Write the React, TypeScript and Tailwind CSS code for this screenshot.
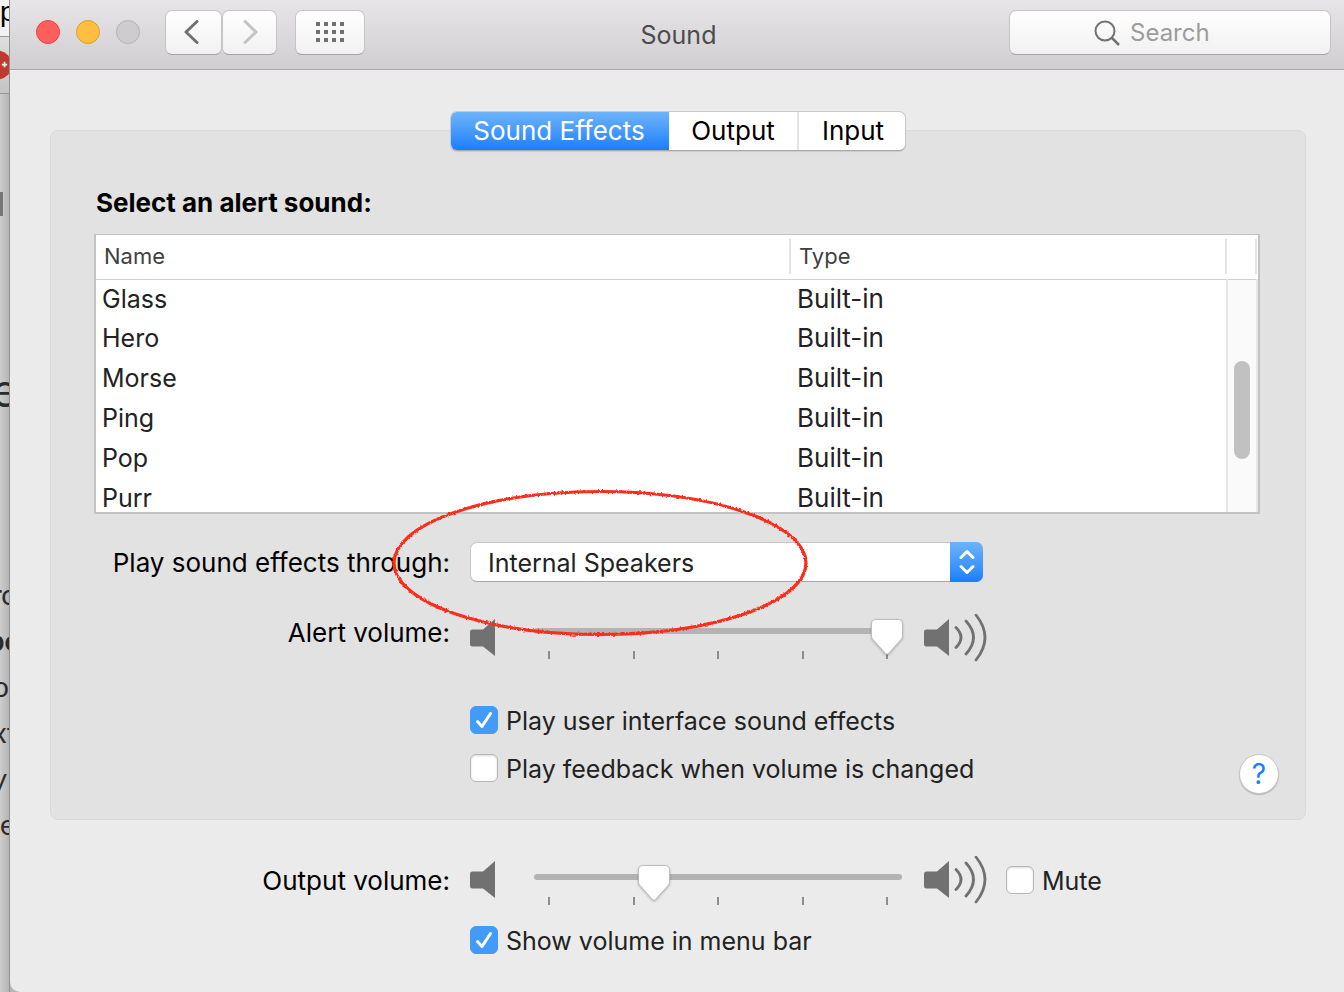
import React, { useState } from 'react';
import clsx from 'clsx';

const sounds = ['Glass', 'Hero', 'Morse', 'Ping', 'Pop', 'Purr'];
const tabs = ['Sound Effects', 'Output', 'Input'];

const tabWidths: Record<string, string> = {
  'Sound Effects': 'w-[218px]',
  Output: 'w-[130px]',
  Input: 'w-[108px]',
};

const speakerBody = 'M2.5 13.500H13L25 3V40L13 30.500H2.500Q0 30.500 0 28V16Q0 13.500 2.500 13.500Z';

const SpeakerLow: React.FC = () => (
  <svg className="h-11 w-[26px] shrink-0 text-[#717171]" viewBox="0 0 26 44" fill="currentColor" aria-hidden="true">
    <path d={speakerBody} />
  </svg>
);

const SpeakerHigh: React.FC = () => (
  <svg className="h-12 w-16 shrink-0 text-[#717171]" viewBox="0 -2 64 48" fill="none" aria-hidden="true">
    <path d={speakerBody} fill="currentColor" />
    <path
      d="M32 11.500Q42 21.500 32 31.500M42 5Q57 21.500 42 38M52 -1Q70 21.500 52 44"
      stroke="currentColor"
      strokeWidth="2.800"
      strokeLinecap="round"
    />
  </svg>
);

interface SliderProps {
  id: string;
  initial: number;
  className?: string;
}

const Slider: React.FC<SliderProps> = ({ id, initial, className }) => {
  const [value, setValue] = useState(initial);

  return (
    <div className={clsx('w-[368px]', className)}>
      <div className="relative flex h-[26px] items-center">
        <input
          id={id}
          type="range"
          min={0}
          max={100}
          value={value}
          onChange={(e) => setValue(Number(e.target.value))}
          className="h-[6px] w-full appearance-none rounded-full bg-[#b3b3b3] outline-none [&::-webkit-slider-thumb]:h-6 [&::-webkit-slider-thumb]:w-8 [&::-webkit-slider-thumb]:appearance-none [&::-webkit-slider-thumb]:bg-transparent"
        />
        {/* Thumb */}
        <div className="pointer-events-none absolute inset-x-[15px] top-0">
          <svg
            className="absolute top-0 h-[38px] w-9 -translate-x-1/2 drop-shadow-[0_1px_1px_rgba(0,0,0,0.25)]"
            style={{ left: `${value}%` }}
            viewBox="0 0 36 38"
            aria-hidden="true"
          >
            <path
              d="M7 1.500H29Q33.500 1.500 33.500 6V18Q33.500 20 32 21.500L19.500 35.500Q18 37 16.500 35.500L4 21.500Q2.500 20 2.500 18V6Q2.500 1.500 7 1.500Z"
              fill="#fff"
              stroke="#bdbdbd"
              strokeWidth="1"
            />
          </svg>
        </div>
      </div>
      <div className="flex justify-between px-[14px] pt-[7px]">
        {[0, 1, 2, 3, 4].map((tick) => (
          <span key={tick} className="h-2 w-[2px] bg-[#8c8c8c]" />
        ))}
      </div>
    </div>
  );
};

interface CheckboxProps {
  label: string;
  initial?: boolean;
}

const Checkbox: React.FC<CheckboxProps> = ({ label, initial = false }) => {
  const [checked, setChecked] = useState(initial);

  return (
    <label className="flex h-7 items-center gap-2 text-[#222]">
      <span className="relative flex size-7 shrink-0">
        <input
          type="checkbox"
          checked={checked}
          onChange={(e) => setChecked(e.target.checked)}
          className="size-7 appearance-none rounded-[6px] border border-[#b5b5b5] bg-white shadow-[inset_0_1px_2px_rgba(0,0,0,0.15)] checked:border-[#429bf9] checked:bg-[#429bf9] checked:shadow-none"
        />
        {checked && (
          <svg className="pointer-events-none absolute inset-0" viewBox="0 0 28 28" fill="none" aria-hidden="true">
            <path d="M7.500 15.500L12 20.500L20.500 7.500" stroke="#fff" strokeWidth="3" strokeLinecap="round" strokeLinejoin="round" />
          </svg>
        )}
      </span>
      <span className="pt-[2px] whitespace-nowrap">{label}</span>
    </label>
  );
};

// Sliver of the page that sits behind the window
const BackgroundPage: React.FC = () => (
  <aside className="w-[10px] shrink-0 overflow-hidden border-r border-[#929292] bg-linear-to-r from-[#cdcdcd] to-[#b5b5b5] font-['Lato',sans-serif] text-[28px] leading-[46px] text-[#2b2b2b]">
    <div className="flex h-[37px] items-center border-b border-[#999] bg-[#f2f2f2] pb-3 font-['Liberation_Sans',sans-serif] text-black">p</div>
    <div className="flex h-[57px] items-center border-b border-[#999] bg-linear-to-b from-[#dedede] to-[#c4c4c4]">
      <svg className="h-8 w-[10px]" viewBox="0 0 10 32" aria-hidden="true">
        <circle cx="-3" cy="16" r="16" fill="#c0392f" />
        <path d="M2 15.500H8M5 12.500V18.500" stroke="#eee" strokeWidth="2" />
      </svg>
    </div>
    <div className="mt-[98px] h-6 w-[3px] bg-[#777]" />
    <div className="mt-[150px] flex h-[46px] justify-center text-[48px]">e</div>
    <div className="mt-[159px]">
      <div className="flex justify-center">ro</div>
      <div className="flex justify-center font-bold">bo</div>
      <div className="flex justify-end">o</div>
      <div className="flex justify-center">xt</div>
      <div className="flex justify-end pr-[2px]">y</div>
      <div className="flex">e</div>
    </div>
  </aside>
);

const Toolbar: React.FC = () => {
  const button =
    'flex h-[45px] items-center justify-center rounded-[7px] border border-[#c6c4c7] border-b-[#a5a3a6] bg-linear-to-b from-white to-[#f1f1f1]';

  return (
    <header className="grid h-[70px] grid-cols-[1fr_auto_1fr] items-center border-b border-[#a9a7aa] bg-linear-to-b from-[#e7e5e8] to-[#d0ced1] pr-[13px] pb-[5px] pl-[26px]">
      <div className="flex items-center">
        <div className="flex gap-4">
          <button type="button" aria-label="Close" className="size-6 rounded-full border border-[#e2463f] bg-[#fd605c]" />
          <button type="button" aria-label="Minimize" className="size-6 rounded-full border border-[#dfa023] bg-[#febe40]" />
          <button type="button" aria-label="Zoom" className="size-6 rounded-full border border-[#b3b2b3] bg-[#cdcdcd]" />
        </div>
        <button type="button" aria-label="Back" className={clsx(button, 'ml-[25px] w-[57px] pr-1')}>
          <svg className="h-6 w-4" viewBox="0 0 16 24" fill="none" stroke="#717171" strokeWidth="3" strokeLinecap="round" strokeLinejoin="round" aria-hidden="true">
            <path d="M13 1.500L2 12L13 22.500" />
          </svg>
        </button>
        <button type="button" aria-label="Forward" className={clsx(button, 'w-[55px]')}>
          <svg className="h-6 w-4" viewBox="0 0 16 24" fill="none" stroke="#c3c3c3" strokeWidth="3" strokeLinecap="round" strokeLinejoin="round" aria-hidden="true">
            <path d="M3 1.500L14 12L3 22.500" />
          </svg>
        </button>
        <button type="button" aria-label="Show All" className={clsx(button, 'ml-[18px] w-[70px]')}>
          <span className="grid grid-cols-4 gap-1">
            {Array.from({ length: 12 }, (_, i) => (
              <span key={i} className="size-1 bg-[#717171]" />
            ))}
          </span>
        </button>
      </div>
      <h1 className="pt-[6px] pr-[10px] text-[#4d4b4e]">Sound</h1>
      <label className="flex h-[45px] w-[322px] items-center gap-[10px] justify-self-end rounded-[7px] border border-[#c6c4c7] border-b-[#a5a3a6] bg-linear-to-b from-white to-[#f1f1f1] pt-[2px] pl-[84px]">
        <svg className="size-[26px] shrink-0" viewBox="0 0 26 26" fill="none" stroke="#717171" strokeWidth="2" aria-hidden="true">
          <circle cx="11" cy="11" r="9.500" />
          <path d="M17.500 17.500L25 25" strokeWidth="2.500" />
        </svg>
        <input
          type="search"
          placeholder="Search"
          aria-label="Search"
          className="min-w-0 flex-1 bg-transparent text-[24px] outline-none placeholder:text-[#9c9c9c]"
        />
      </label>
    </header>
  );
};

const SoundTable: React.FC = () => (
  <div className="mr-[19px] h-[280px] overflow-hidden border-2 border-t border-[#c3c3c3] bg-white">
    <table className="w-full table-fixed border-collapse text-left">
      <colgroup>
        <col />
        <col className="w-[436px]" />
        <col className="w-[30px]" />
      </colgroup>
      <thead>
        <tr className="h-11 border-b border-[#d0d0d0] text-[22px] leading-[35px] text-[#3f3f3f]">
          <th className="p-0 font-normal">
            <div className="border-r-2 border-[#e3e3e3] pl-2">Name</div>
          </th>
          <th className="p-0 font-normal">
            <div className="border-r-2 border-[#e3e3e3] pl-2">Type</div>
          </th>
          <td className="p-0">
            <div className="h-[35px] border-r-2 border-[#e3e3e3]" />
          </td>
        </tr>
      </thead>
      <tbody>
        {sounds.map((sound, index) => (
          <tr key={sound} className="h-10 align-top leading-[38px] text-[#222]">
            <td className="p-0 pl-[6px]">{sound}</td>
            <td className="p-0 pl-[6px] text-[26px]">Built-in</td>
            {index === 0 && (
              <td rowSpan={6} className="border-x-2 border-[#e7e7e7] bg-[#fafafa] p-0 align-top">
                <div className="mx-auto mt-[81px] h-[98px] w-4 rounded-full bg-[#c1c1c1]" />
              </td>
            )}
          </tr>
        ))}
      </tbody>
    </table>
  </div>
);

const App: React.FC = () => {
  const [activeTab, setActiveTab] = useState('Sound Effects');

  return (
    <div className="flex h-screen overflow-hidden bg-[#b5b5b5] font-['Inter',sans-serif] text-[25px] leading-[30px] text-black">
      <BackgroundPage />
      <div className="min-w-0 flex-1 overflow-hidden rounded-bl-[10px] bg-[#ebebeb]">
        <Toolbar />

        <main className="pt-[41px] pr-[38px] pl-10">
          {/* Tabs */}
          <div role="tablist" className="relative z-10 mx-auto flex h-10 w-[456px] overflow-hidden rounded-[7px] border border-[#c9c9c9] border-b-[#a8a8a8] bg-white text-[26px] shadow-[0_1px_1px_rgba(0,0,0,0.1)]">
            {tabs.map((tab) => (
              <button
                key={tab}
                type="button"
                role="tab"
                aria-selected={tab === activeTab}
                onClick={() => setActiveTab(tab)}
                className={clsx(
                  tabWidths[tab],
                  'shrink-0 border-r-2 whitespace-nowrap last:border-r-0',
                  tab === activeTab
                    ? 'border-transparent bg-linear-to-b from-[#6cb3fa] to-[#177efc] bg-origin-border text-white'
                    : 'border-[#e3e3e3]'
                )}
              >
                {tab}
              </button>
            ))}
          </div>

          <section className="-mt-[21px] rounded-[8px] border border-[#dadada] bg-[#e2e2e2] pt-[57px] pr-[26px] pb-[25px] pl-[43px]">
            <h2 className="mb-4 pl-[2px] text-[26px] font-bold">Select an alert sound:</h2>
            <SoundTable />

            <div className="mt-7 grid grid-cols-[356px_1fr] gap-x-5">
              <label htmlFor="device" className="text-right text-[26px] leading-[42px] whitespace-nowrap">
                Play sound effects through:
              </label>
              <div className="relative w-[513px]">
                <select
                  id="device"
                  className="h-10 w-full appearance-none rounded-[7px] border border-[#c6c6c6] border-b-[#a8a8a8] bg-white pt-[2px] pl-[17px] text-[#222] outline-none"
                >
                  <option>Internal Speakers</option>
                </select>
                <span className="pointer-events-none absolute top-0 right-0 flex h-10 w-[33px] items-center justify-center rounded-r-[7px] bg-linear-to-b from-[#6cb3fa] to-[#177efc]">
                  <svg className="h-[26px] w-4" viewBox="0 0 16 26" fill="none" stroke="#fff" strokeWidth="3" strokeLinecap="round" strokeLinejoin="round" aria-hidden="true">
                    <path d="M2 8.500L8 2.500L14 8.500M2 17.500L8 23.500L14 17.500" />
                  </svg>
                </span>
                {/* Hand-drawn marker ring */}
                <svg className="pointer-events-none absolute -top-[54px] -left-[80px] z-20 h-[150px] w-[420px]" viewBox="0 0 420 150" fill="none" aria-hidden="true">
                  <filter id="rough">
                    <feTurbulence type="fractalNoise" baseFrequency="0.5" numOctaves="2" result="noise" />
                    <feDisplacementMap in="SourceGraphic" in2="noise" scale="3" xChannelSelector="R" yChannelSelector="G" />
                  </filter>
                  <ellipse cx="210" cy="75" rx="206" ry="71.500" stroke="#fb2d1c" strokeWidth="3.200" filter="url(#rough)" />
                </svg>
              </div>

              <label htmlFor="alert-volume" className="mt-[30px] text-right text-[26px] leading-[38px]">
                Alert volume:
              </label>
              <div className="mt-[30px] flex h-12 items-center">
                <SpeakerLow />
                <Slider id="alert-volume" initial={100} className="mx-[38px] mr-[22px]" />
                <SpeakerHigh />
              </div>
            </div>

            <div className="mt-11 flex items-end justify-between pl-[376px]">
              <div className="flex flex-col gap-5 pb-3">
                <Checkbox label="Play user interface sound effects" initial />
                <Checkbox label="Play feedback when volume is changed" />
              </div>
              <button
                type="button"
                aria-label="Help"
                className="flex size-10 items-center justify-center rounded-full border border-[#c6c6c6] bg-white text-[28px] text-[#177efc] shadow-[0_1px_1px_rgba(0,0,0,0.2)]"
              >
                ?
              </button>
            </div>
          </section>

          <section className="mt-9 pl-11">
            <div className="grid grid-cols-[356px_1fr] gap-x-5">
              <label htmlFor="output-volume" className="text-right text-[26px] leading-[50px]">
                Output volume:
              </label>
              <div className="flex h-12 items-center">
                <SpeakerLow />
                <Slider id="output-volume" initial={31} className="mx-[38px] mr-[22px] pt-2" />
                <SpeakerHigh />
                <div className="ml-[18px]">
                  <Checkbox label="Mute" />
                </div>
              </div>
            </div>
            <div className="mt-5 pl-[376px]">
              <Checkbox label="Show volume in menu bar" initial />
            </div>
          </section>
        </main>
      </div>
    </div>
  );
};

export default App;
